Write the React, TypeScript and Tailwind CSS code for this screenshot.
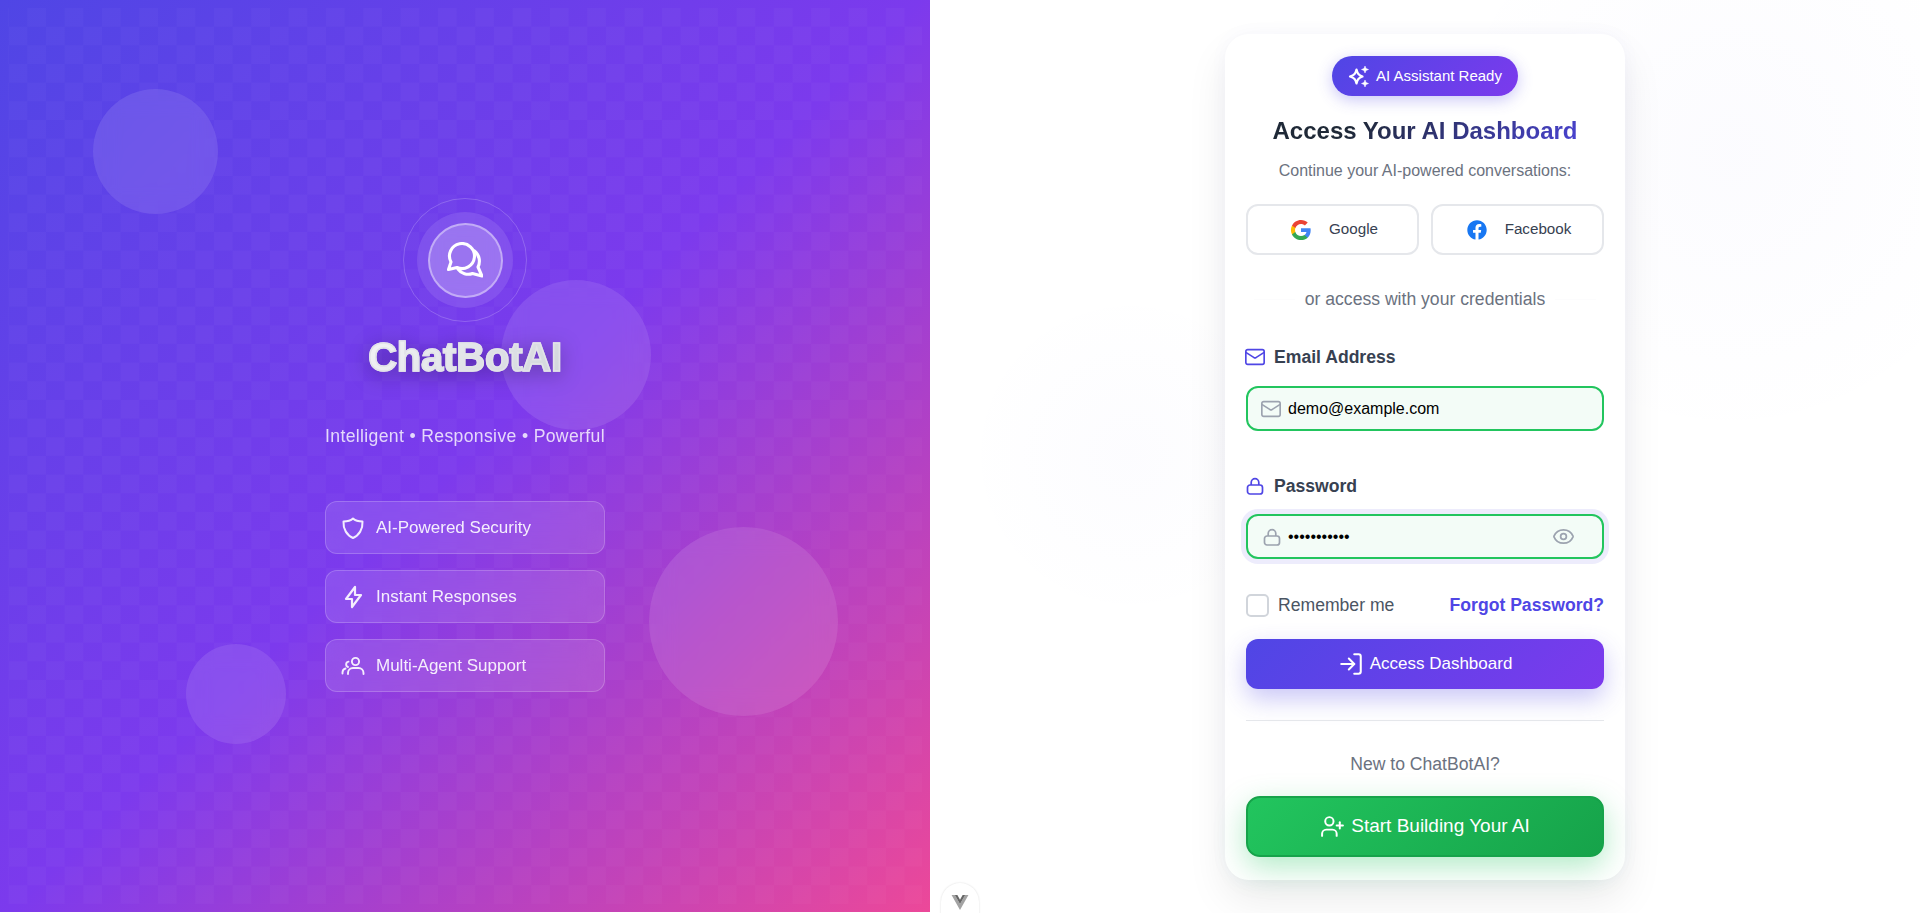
import { Eye, LogIn, Mail, UserPlus } from "lucide-react"
import { FaFacebook } from "react-icons/fa"

function ChatIcon() {
    return (
        <svg width="36" height="36" viewBox="0 0 36 36" fill="none" stroke="white" strokeWidth="3.1" strokeLinecap="round" strokeLinejoin="round">
            <path d="M1.5 27.5 L4 20 A12.5 12.5 0 1 1 10 25.5 Z" />
            <path d="M27.5 9 A13 13 0 0 1 31 25 L35 34 L25.5 31.5 A12.5 12.5 0 0 1 11 27" />
        </svg>
    )
}

function SparkIcon() {
    return (
        <svg width="22" height="22" viewBox="0 0 22 22" fill="none" stroke="white" strokeWidth="2.2" strokeLinejoin="round">
            <path d="M8.5 4.5 C9.5 8.5 10.5 10 14.5 11.5 C10.5 13 9.5 14.5 8.5 18.5 C7.5 14.5 6.5 13 2 11.5 C6.5 10 7.5 8.5 8.5 4.5 Z" />
            <path d="M17 1 L18 3.5 L20.5 4.5 L18 5.5 L17 8 L16 5.5 L13.5 4.5 L16 3.5 Z" fill="white" strokeWidth="0.5" />
            <path d="M17 15 L18 17.5 L20.5 18.5 L18 19.5 L17 22 L16 19.5 L13.5 18.5 L16 17.5 Z" fill="white" strokeWidth="0.5" />
        </svg>
    )
}

function GoogleIcon() {
    return (
        <svg width="22" height="22" viewBox="0 0 24 24">
            <path fill="#4285F4" d="M22.56 12.25c0-.78-.07-1.53-.2-2.25H12v4.26h5.92c-.26 1.37-1.04 2.53-2.21 3.31v2.77h3.57c2.08-1.92 3.28-4.74 3.28-8.09z" />
            <path fill="#34A853" d="M12 23c2.97 0 5.46-.98 7.28-2.66l-3.57-2.77c-.98.66-2.23 1.06-3.71 1.06-2.86 0-5.29-1.93-6.16-4.53H2.18v2.84C3.99 20.53 7.7 23 12 23z" />
            <path fill="#FBBC05" d="M5.84 14.09c-.22-.66-.35-1.36-.35-2.09s.13-1.43.35-2.09V7.07H2.18C1.43 8.55 1 10.22 1 12s.43 3.45 1.18 4.93l2.85-2.22.81-.62z" />
            <path fill="#EA4335" d="M12 5.38c1.62 0 3.06.56 4.21 1.64l3.15-3.15C17.45 2.09 14.97 1 12 1 7.7 1 3.99 3.47 2.18 7.07l3.66 2.84c.87-2.6 3.3-4.53 6.16-4.53z" />
        </svg>
    )
}

function VueMark() {
    return (
        <svg width="18" height="15" viewBox="0 0 18 16">
            <path fill="#a3a3a3" d="M0 0 H3.5 L9 9.5 L14.5 0 H18 L9 16 Z" />
            <path fill="#666666" d="M3.5 0 H6.2 L9 5 L11.8 0 H14.5 L9 9.5 Z" />
        </svg>
    )
}

function LockIcon({ className }: { className: string }) {
    return (
        <svg width="18" height="18" viewBox="0 0 18 18" fill="none" stroke="currentColor" strokeWidth="1.7" className={className}>
            <rect x="1.5" y="8" width="15" height="9" rx="2.5" />
            <path d="M5.2 8 V5.5 a3.8 3.8 0 0 1 7.6 0 V8" />
        </svg>
    )
}

function ShieldIcon() {
    return (
        <svg width="24" height="24" viewBox="0 0 24 24" fill="none" stroke="currentColor" strokeWidth="2" strokeLinejoin="round">
            <path d="M12 2.5 C14.5 4.8 17.5 5.5 21.5 5.5 C22 13 18 19.5 12 22 C6 19.5 2 13 2.5 5.5 C6.5 5.5 9.5 4.8 12 2.5 Z" />
        </svg>
    )
}

function BoltIcon() {
    return (
        <svg width="24" height="26" viewBox="0 0 24 26" fill="none" stroke="currentColor" strokeWidth="2.2" strokeLinecap="round" strokeLinejoin="round">
            <path d="M14 3 V11 H20 L11 23 V15 H5 L14 3" />
        </svg>
    )
}

function PeopleIcon() {
    return (
        <svg width="24" height="24" viewBox="0 0 24 24" fill="none" stroke="currentColor" strokeWidth="1.9" strokeLinecap="round">
            <circle cx="14.5" cy="7.5" r="3.6" />
            <path d="M7 20 V19 A5 5 0 0 1 12 14 H17.5 A5 5 0 0 1 22.5 19 V20" />
            <path d="M7.5 7.6 A2.8 2.8 0 0 0 7 13" />
            <path d="M1.5 19.5 V18.5 A4.2 4.2 0 0 1 4.5 14.5" />
        </svg>
    )
}

const features = [
    { icon: <ShieldIcon />, label: "AI-Powered Security" },
    { icon: <BoltIcon />, label: "Instant Responses" },
    { icon: <PeopleIcon />, label: "Multi-Agent Support" },
]

export default function App() {
    return (
        <div className="relative flex h-[913px] overflow-hidden bg-white font-['Liberation_Sans',Arial,sans-serif]">
            {/* left brand panel */}
            <div className="relative flex h-[912px] w-[930px] flex-col items-center overflow-hidden bg-[linear-gradient(135deg,#4f46e5_0%,#7c3aed_50%,#ec4899_100%)] pt-[198px]">
                <div className="absolute inset-2 bg-[conic-gradient(rgba(255,255,255,0.022)_90deg,transparent_90deg_180deg,rgba(255,255,255,0.022)_180deg_270deg,transparent_270deg)] bg-size-[37.33px_37.33px] bg-[position:0.67px_0px]" />
                <div className="absolute left-[93px] top-[89px] size-[125px] rounded-full bg-white/10 backdrop-blur-md" />
                <div className="absolute left-[501px] top-[280px] size-[150px] rounded-full bg-white/10 backdrop-blur-md" />
                <div className="absolute left-[649px] top-[527px] size-[189px] rounded-full bg-white/10 backdrop-blur-md" />
                <div className="absolute left-[186px] top-[644px] size-[100px] rounded-full bg-white/10 backdrop-blur-md" />

                <div className="relative flex size-[124px] items-center justify-center rounded-full border border-white/20">
                    <div className="flex size-[96px] items-center justify-center rounded-full bg-white/10 backdrop-blur-md">
                        <div className="flex size-[75px] items-center justify-center rounded-full border-2 border-white/40 bg-white/20">
                            <ChatIcon />
                        </div>
                    </div>
                </div>
                <h1 className="relative mt-[11px] bg-[linear-gradient(135deg,#f3f4f6,#d1d5db)] bg-clip-text text-[40px] leading-[48px] font-bold tracking-[-0.2px] text-transparent [-webkit-text-stroke:1.5px_#e2e3e8] drop-shadow-[0_4px_10px_rgba(0,0,0,0.3)]">
                    ChatBotAI
                </h1>
                <p className="relative mt-[43px] text-[17.6px] leading-[24px] tracking-[0.35px] text-white/80">
                    Intelligent • Responsive • Powerful
                </p>
                <div className="relative mt-[53px] flex w-[280px] flex-col gap-4">
                    {features.map((feature) => (
                        <div
                            key={feature.label}
                            className="flex h-[53px] items-center gap-[11px] rounded-xl border border-white/20 bg-white/10 px-[15px] text-white/90 backdrop-blur-md"
                        >
                            {feature.icon}
                            <span className="text-[17px] font-medium">{feature.label}</span>
                        </div>
                    ))}
                </div>
            </div>

            {/* right form panel */}
            <div className="flex h-[912px] flex-1 items-center justify-center bg-[radial-gradient(circle_at_200px_455px,rgba(79,70,229,0.015)_0,transparent_170px),radial-gradient(circle_at_800px_150px,rgba(79,70,229,0.02)_0,transparent_300px)] pt-[2px]">
                <div className="flex h-[846px] w-[400px] flex-col rounded-3xl bg-white px-[21px] pt-[22px] shadow-[0_20px_40px_rgba(0,0,0,0.08),0_0_20px_rgba(79,70,229,0.03)]">
                    <div className="flex justify-center">
                        <div className="flex h-10 w-[186px] items-center justify-center gap-[6px] rounded-full bg-[linear-gradient(135deg,#4f46e5,#7c3aed)] text-[15px] font-medium text-white shadow-[0_4px_15px_rgba(79,70,229,0.3)]">
                            <SparkIcon />
                            AI Assistant Ready
                        </div>
                    </div>
                    <h2 className="mt-[21px] bg-[linear-gradient(135deg,#1f2937_30%,#4f46e5)] bg-clip-text text-center text-[24px] leading-[28px] font-bold text-transparent">
                        Access Your AI Dashboard
                    </h2>
                    <p className="mt-[14px] text-center text-[16px] leading-[24px] text-[#6b7280]">
                        Continue your AI-powered conversations:
                    </p>
                    <div className="mt-[21px] grid grid-cols-2 gap-3">
                        <button className="flex h-[51px] items-center justify-center gap-[17px] rounded-xl border-2 border-[#e5e7eb] bg-white pl-[3px] text-[15.2px] text-[#374151]">
                            <GoogleIcon />
                            Google
                        </button>
                        <button className="flex h-[51px] items-center justify-center gap-[18px] rounded-xl border-2 border-[#e5e7eb] bg-white pl-[3px] text-[15.2px] text-[#374151]">
                            <FaFacebook size={20} color="#1877f2" />
                            Facebook
                        </button>
                    </div>
                    <div className="mt-[32px] flex items-center gap-[10px] px-[8px]">
                        <div className="h-px flex-1 bg-[#fcfcfd]" />
                        <span className="text-[17.6px] leading-[24px] text-[#6b7280]">or access with your credentials</span>
                        <div className="h-px flex-1 bg-[#fcfcfd]" />
                    </div>

                    <label className="mt-[34px] flex h-6 items-center gap-[8px] text-[17.6px] font-semibold text-[#374151]">
                        <Mail size={22} strokeWidth={1.8} className="-ml-[2px] text-[#4f46e5]" />
                        Email Address
                    </label>
                    <div className="mt-[17px] flex h-[45px] items-center gap-[6px] rounded-xl border-2 border-[#22c55e] bg-[#f3fcf7] pl-[12px] pr-[14px]">
                        <Mail size={22} strokeWidth={1.8} className="shrink-0 text-[#9ca3af]" />
                        <input readOnly value="demo@example.com" className="w-full bg-transparent text-[16px] text-black outline-none" />
                    </div>

                    <label className="mt-[43px] flex h-6 items-center gap-[10px] text-[17.6px] font-semibold text-[#374151]">
                        <LockIcon className="text-[#4f46e5]" />
                        Password
                    </label>
                    <div className="mt-[16px] flex h-[45px] items-center gap-[7px] rounded-xl border-2 border-[#22c55e] bg-[#f3fcf7] pl-[15px] pr-[27px] shadow-[0_0_0_5px_rgba(79,70,229,0.1)]">
                        <LockIcon className="shrink-0 text-[#9ca3af]" />
                        <input readOnly type="password" value="password123" className="w-full bg-transparent text-[16px] text-black outline-none" />
                        <Eye size={23} strokeWidth={1.8} className="shrink-0 text-[#9ca3af]" />
                    </div>

                    <div className="mt-[34px] flex h-[24px] items-center justify-between">
                        <div className="flex items-center gap-[9px]">
                            <span className="size-[23px] rounded-[5px] border-2 border-[#d1d5db] bg-white" />
                            <span className="text-[17.6px] text-[#4b5563]">Remember me</span>
                        </div>
                        <a className="text-[17.6px] font-bold text-[#4f46e5]">Forgot Password?</a>
                    </div>
                    <button className="mt-[22px] flex h-[50px] items-center justify-center gap-[6px] rounded-xl bg-[linear-gradient(135deg,#4f46e5,#7c3aed)] text-[17px] font-medium text-white shadow-[0_10px_25px_rgba(79,70,229,0.3)]">
                        <LogIn size={26} strokeWidth={1.9} />
                        Access Dashboard
                    </button>
                    <div className="mt-[31px] h-px bg-[#e5e7eb]" />
                    <p className="mt-[31px] text-center text-[17.6px] leading-[24px] text-[#6b7280]">New to ChatBotAI?</p>
                    <button className="mt-[20px] flex h-[61px] items-center justify-center gap-[6px] rounded-[14px] border-2 border-[#16a34a] bg-[linear-gradient(135deg,#22c55e,#16a34a)] text-[19px] font-medium text-white shadow-[0_10px_30px_rgba(34,197,94,0.35)]">
                        <UserPlus size={25} strokeWidth={1.9} />
                        Start Building Your AI
                    </button>
                </div>
            </div>

            {/* devtools toggle */}
            <div className="absolute left-[941px] top-[883px] flex h-[60px] w-[38px] justify-center rounded-full bg-white pt-[12px] shadow-[0_0_2px_rgba(0,0,0,0.15)]">
                <VueMark />
            </div>
        </div>
    )
}
